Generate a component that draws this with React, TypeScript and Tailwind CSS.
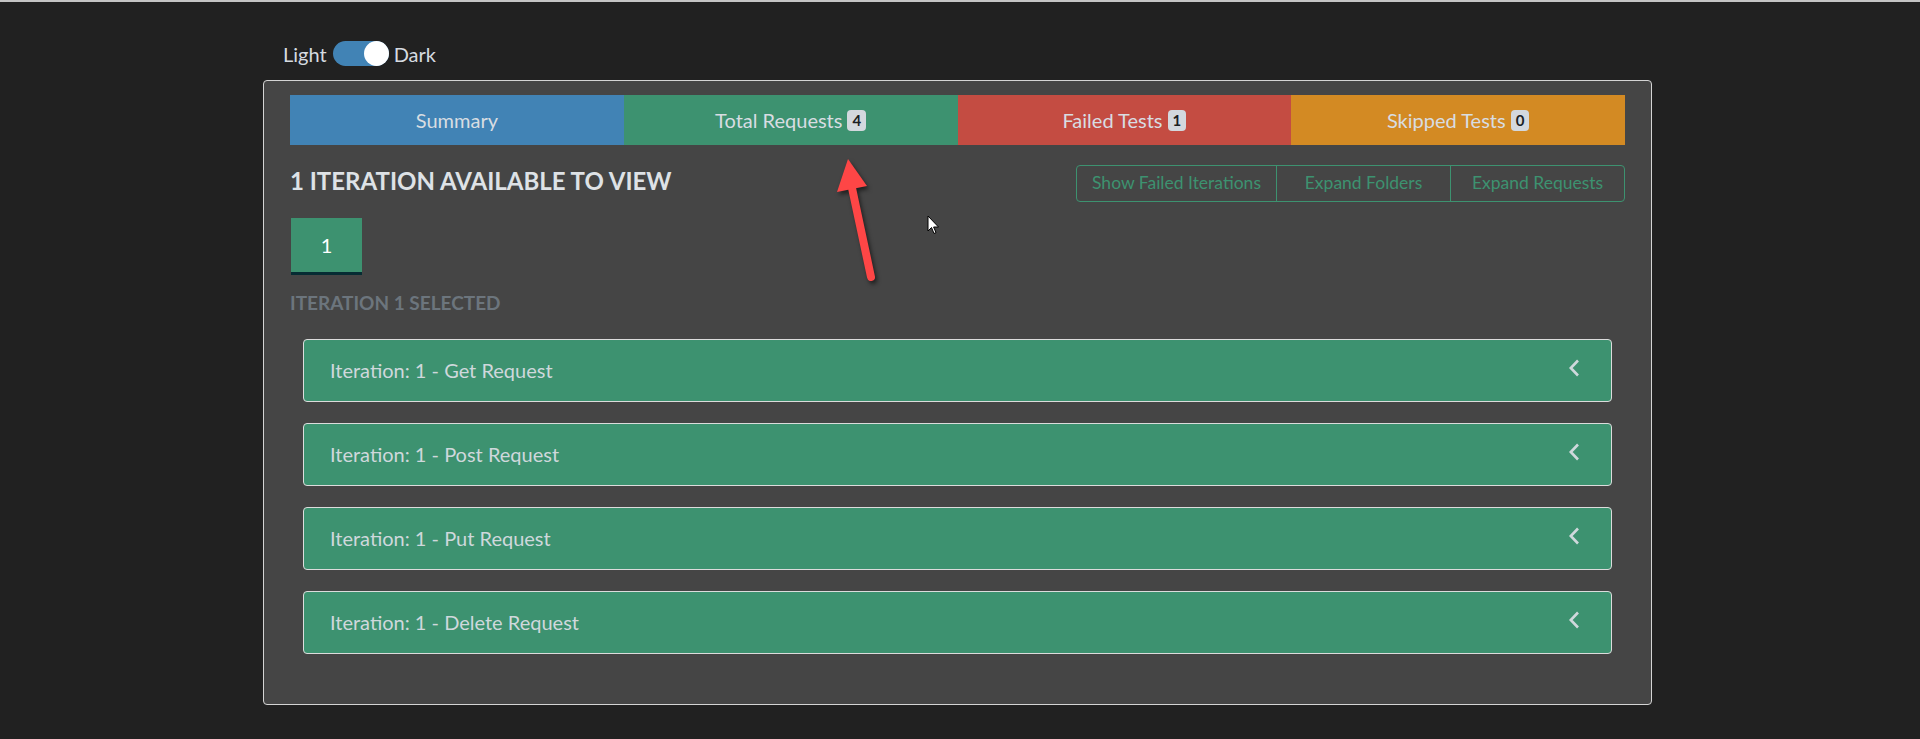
const tabs = [
  { label: "Summary", color: "bg-[#4183b5]", badge: null },
  { label: "Total Requests", color: "bg-[#3d9270]", badge: "4" },
  { label: "Failed Tests", color: "bg-[#c44c42]", badge: "1" },
  { label: "Skipped Tests", color: "bg-[#d38a23]", badge: "0" },
];

const requests = ["Get Request", "Post Request", "Put Request", "Delete Request"];

const Chevron = () => (
  <svg width="12" height="20" viewBox="0 0 12 20" fill="none">
    <polyline points="10,2.5 2.8,10 10,17.5" stroke="#cfd8dc" strokeWidth="2.6" />
  </svg>
);

export default function App() {
  return (
    <div
      className="relative h-[739px] overflow-hidden bg-[#212121] border-t-2 border-[#c4c4c4]"
      style={{ fontFamily: "Lato, 'Open Sans', sans-serif" }}
    >
      <div className="ml-[263px] w-[1389px]">
        {/* theme switch */}
        <div className="flex items-center mt-[39px] ml-[20px] h-[25px] text-[20px] text-[#d6dbe0]">
          <span>Light</span>
          <div className="ml-[6px] mr-[5px] w-[56px] h-[25px] rounded-full bg-[#4183b5] flex justify-end">
            <div className="w-[25px] h-[25px] rounded-full bg-white" />
          </div>
          <span>Dark</span>
        </div>

        <div className="mt-[14px] border border-[#d4d4d4] rounded-[4px] bg-[#454545] px-[26px] pt-[14px] pb-[50px]">
          <div className="grid grid-cols-4 h-[50px]">
            {tabs.map((t) => (
              <div
                key={t.label}
                className={`${t.color} flex items-center justify-center gap-[5px] text-[20px] text-[#d8dde2]`}
              >
                <span>{t.label}</span>
                {t.badge && (
                  <span className="bg-[#d3d8de] text-[#1b1f24] font-bold text-[15px] leading-none rounded-[4px] px-[5px] py-[3px]">
                    {t.badge}
                  </span>
                )}
              </div>
            ))}
          </div>

          <div className="flex justify-between items-start mt-[20px]">
            <h5 className="mt-[2px] text-[24px] leading-[1.2] font-bold uppercase text-[#dee2e6]">
              1 Iteration available to view
            </h5>
            <div className="flex h-[37px] border border-[#3d9270] rounded-[4px] text-[17.5px] text-[#3d9270]">
              <div className="w-[199px] flex items-center justify-center">Show Failed Iterations</div>
              <div className="w-[174px] flex items-center justify-center border-l border-[#3d9270]">Expand Folders</div>
              <div className="w-[174px] flex items-center justify-center border-l border-[#3d9270]">Expand Requests</div>
            </div>
          </div>

          <div className="mt-[16px] ml-[1px] w-[71px] h-[57px] bg-[#3d9270] border-b-[3px] border-[#062c33] flex items-center justify-center text-[20px] text-white">
            1
          </div>

          <div className="mt-[17px] text-[19px] leading-[1.2] font-bold uppercase text-[#6c757d]">
            Iteration 1 selected
          </div>

          <div className="mt-[24px] mx-[13px] flex flex-col gap-[21px]">
            {requests.map((r) => (
              <div
                key={r}
                className="h-[63px] bg-[#3d9270] border border-[#dcdcdc] rounded-[4px] flex items-center justify-between pl-[26px] pr-[31px] text-[20px] text-[#cfd8dc]"
              >
                <span>Iteration: 1 - {r}</span>
                <span className="-mt-[4px]">
                  <Chevron />
                </span>
              </div>
            ))}
          </div>
        </div>
      </div>

      {/* annotation arrow */}
      <svg
        className="absolute left-0 top-0 pointer-events-none drop-shadow-[2px_3px_2px_rgba(0,0,0,0.55)]"
        width="1920"
        height="739"
      >
        <line x1="871" y1="275" x2="852" y2="186" stroke="#fe4646" strokeWidth="8" strokeLinecap="round" />
        <polygon points="848,157 837,190 867,184" fill="#fe4646" />
      </svg>
      {/* mouse cursor */}
      <svg className="absolute left-[927px] top-[213px]" width="13" height="20" viewBox="0 0 13 20">
        <path d="M1,1 L1,16 L4.5,12.5 L7,18.5 L9,17.6 L6.6,12 L11.5,12 Z" fill="#fff" stroke="#000" strokeWidth="1" />
      </svg>
    </div>
  );
}
